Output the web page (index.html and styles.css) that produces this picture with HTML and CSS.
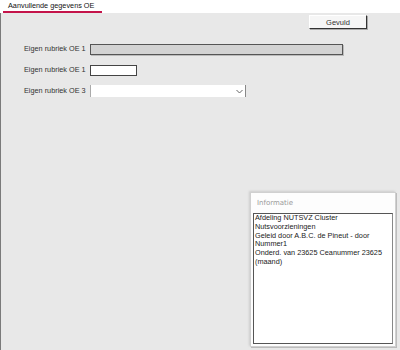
FILE: index.html
```html
<!DOCTYPE html>
<html lang="nl">
<head>
    <meta charset="UTF-8">
    <meta name="viewport" content="width=device-width, initial-scale=1.0">
    <title>Aanvullende gegevens OE</title>
    <link rel="stylesheet" href="styles.css">
</head>
<body>
    <div class="tabbar">
        <span class="tab">Aanvullende gegevens OE</span>
    </div>
    <div class="panel">
        <div class="toolbar">
            <button class="btn" type="button">Gevuld</button>
        </div>
        <div class="fields">
            <label class="lbl">Eigen rubriek OE 1</label>
            <div class="input input-wide input-disabled"></div>

            <label class="lbl">Eigen rubriek OE 1</label>
            <div class="input input-small"></div>

            <label class="lbl">Eigen rubriek OE 3</label>
            <div class="select">
                <svg class="chevron" width="7" height="5" viewBox="0 0 7 5">
                    <path d="M0.5 1 L3.5 4 L6.5 1" fill="none" stroke="#666" stroke-width="1"/>
                </svg>
            </div>
        </div>
        <div class="info">
            <div class="info-title">Informatie</div>
            <div class="info-text">Afdeling NUTSVZ Cluster<br>Nutsvoorzieningen<br>Geleid door A.B.C. de Pineut - door<br>Nummer1<br>Onderd. van 23625 Ceanummer 23625<br>(maand)</div>
        </div>
    </div>
</body>
</html>
```

FILE: styles.css
```css
html, body {
    margin: 0;
    height: 100%;
}

body {
    font-family: "Liberation Sans", Arial, sans-serif;
    font-size: 7.3px;
    color: #222;
    background: #fff;
    display: flex;
    flex-direction: column;
}

.tabbar {
    height: 13px;
    background: #fff;
    display: flex;
    align-items: flex-end;
    padding-left: 3px;
}

.tab {
    display: block;
    padding: 0 8px 0 5px;
    line-height: 11px;
    border-bottom: 2px solid #c4144a;
    color: #111;
    white-space: nowrap;
}

.panel {
    flex: 1;
    background: #e8e8e8;
    border-left: 1px solid #7a7a7a;
    display: flex;
    flex-direction: column;
}

.toolbar {
    display: flex;
    justify-content: flex-end;
    padding: 2px 33px 0 0;
}

.btn {
    width: 58px;
    height: 14px;
    padding: 0;
    font-family: inherit;
    font-size: 7.5px;
    color: #333;
    background: #f6f6f6;
    border: 1px solid #fff;
    border-right-color: #333;
    border-bottom-color: #333;
    box-shadow: 1px 1px 0 #aaa;
}

.fields {
    display: grid;
    grid-template-columns: 66px auto;
    align-items: center;
    row-gap: 9px;
    padding: 14px 0 0 23px;
}

.lbl {
    color: #333;
    line-height: 12px;
    white-space: nowrap;
}

.input {
    height: 9px;
    border: 1px solid #444;
    background: #fff;
}

.input-wide {
    width: 251px;
}

.input-disabled {
    background: #d3d3d3;
    border-color: #555;
    box-shadow: 1px 1px 0 #bbb;
}

.input-small {
    width: 45px;
}

.select {
    width: 156px;
    height: 12px;
    background: #fff;
    border-left: 1px solid #aaa;
    border-right: 1px solid #888;
    display: flex;
    align-items: center;
    justify-content: flex-end;
    padding-right: 2px;
    box-sizing: border-box;
}

.chevron {
    display: block;
}

.info {
    margin: auto 4px 3px auto;
    width: 146px;
    height: 155px;
    background: #fdfdfd;
    border: 1px solid #d0d0d0;
    box-shadow: -1px -1px 2px #ccc, 1px 1px 0 #bbb;
    display: flex;
    flex-direction: column;
    box-sizing: border-box;
}

.info-title {
    font-family: "DejaVu Sans", sans-serif;
    font-size: 7px;
    color: #9a9a9a;
    padding: 6px 0 0 6px;
    height: 14px;
}

.info-text {
    flex: 1;
    margin: 0 2px 2px 2px;
    border: 1px solid #555;
    border-right-color: #888;
    background: #fff;
    padding: 0 1px;
    line-height: 8.8px;
    color: #222;
    white-space: nowrap;
}
```
